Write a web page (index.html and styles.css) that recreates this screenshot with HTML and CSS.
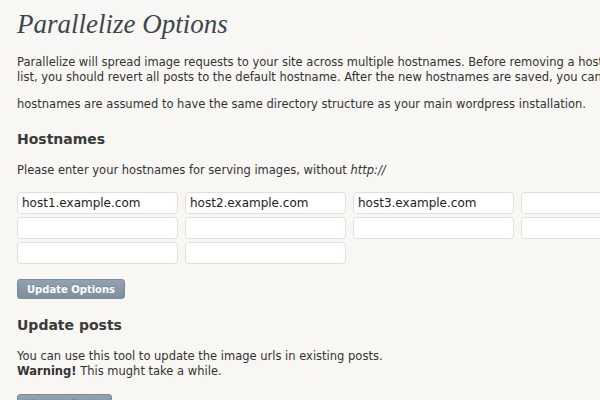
FILE: index.html
```html
<!DOCTYPE html>
<html lang="en">
<head>
    <meta charset="UTF-8">
    <title>Parallelize Options</title>
    <link rel="stylesheet" href="styles.css">
</head>
<body>
    <div class="wrap">
        <h2 class="page-title">Parallelize Options</h2>

        <p class="intro">Parallelize will spread image requests to your site across multiple hostnames. Before removing a hostname from this<br>list, you should revert all posts to the default hostname. After the new hostnames are saved, you can update the posts. All</p>
        <p class="intro">hostnames are assumed to have the same directory structure as your main wordpress installation.</p>

        <h3 class="section-title">Hostnames</h3>
        <p class="lead">Please enter your hostnames for serving images, without <em>http://</em></p>

        <form class="hosts">
            <div class="host-grid">
                <input type="text" class="host" value="host1.example.com">
                <input type="text" class="host" value="host2.example.com">
                <input type="text" class="host" value="host3.example.com">
                <input type="text" class="host" value="">
                <input type="text" class="host" value="">
                <input type="text" class="host" value="">
                <input type="text" class="host" value="">
                <input type="text" class="host" value="">
                <input type="text" class="host" value="">
                <input type="text" class="host" value="">
            </div>
            <button type="button" class="button">Update Options</button>
        </form>

        <h3 class="section-title">Update posts</h3>
        <p class="tight">You can use this tool to update the image urls in existing posts.<br><strong>Warning!</strong> This mught take a while.</p>
        <button type="button" class="button">Update Posts</button>
    </div>
</body>
</html>
```

FILE: styles.css
```css
html, body {
    margin: 0;
    padding: 0;
    overflow: hidden;
}

body {
    background-color: #F8F7F3;
    color: #333333;
    font-family: 'DejaVu Sans', 'Lucida Grande', Verdana, sans-serif;
    font-size: 11.5px;
    line-height: 15px;
}

.wrap {
    padding: 8px 0 0 17px;
    width: 1000px;
}

.page-title {
    font-family: Georgia, 'Liberation Serif', 'DejaVu Serif', serif;
    font-style: italic;
    font-weight: normal;
    font-size: 27px;
    line-height: 32px;
    color: #3C4650;
    margin: 0 0 15px;
}

p {
    margin: 0 0 12px;
    white-space: nowrap;
}

.section-title {
    font-size: 14px;
    font-weight: bold;
    color: #3A3A3A;
    margin: 17px 0 14px;
    line-height: 20px;
}

.lead {
    margin-bottom: 14px;
}

.host-grid {
    display: flex;
    flex-wrap: wrap;
    gap: 3px 7px;
    width: 665px;
}

.host {
    width: 161px;
    height: 22px;
    box-sizing: border-box;
    border: 1px solid #E0DFDB;
    border-radius: 4px;
    background-color: #FFFFFF;
    padding: 2px 4px;
    margin: 0;
    font-family: 'DejaVu Sans', 'Lucida Grande', sans-serif;
    font-size: 12px;
    color: #222222;
}

.button {
    display: block;
    margin-top: 15px;
    background: linear-gradient(#93A2B0, #7E8E9C);
    color: #FFFFFF;
    border: 1px solid #7B8A97;
    border-radius: 3px;
    font-family: 'DejaVu Sans', 'Lucida Grande', sans-serif;
    font-size: 10px;
    font-weight: bold;
    height: 20px;
    padding: 0 9px;
    text-shadow: 0 -1px 0 rgba(0, 0, 0, 0.15);
}

.hosts + .section-title {
    margin-top: 16px;
}

.tight {
    margin-bottom: 14px;
}
```
